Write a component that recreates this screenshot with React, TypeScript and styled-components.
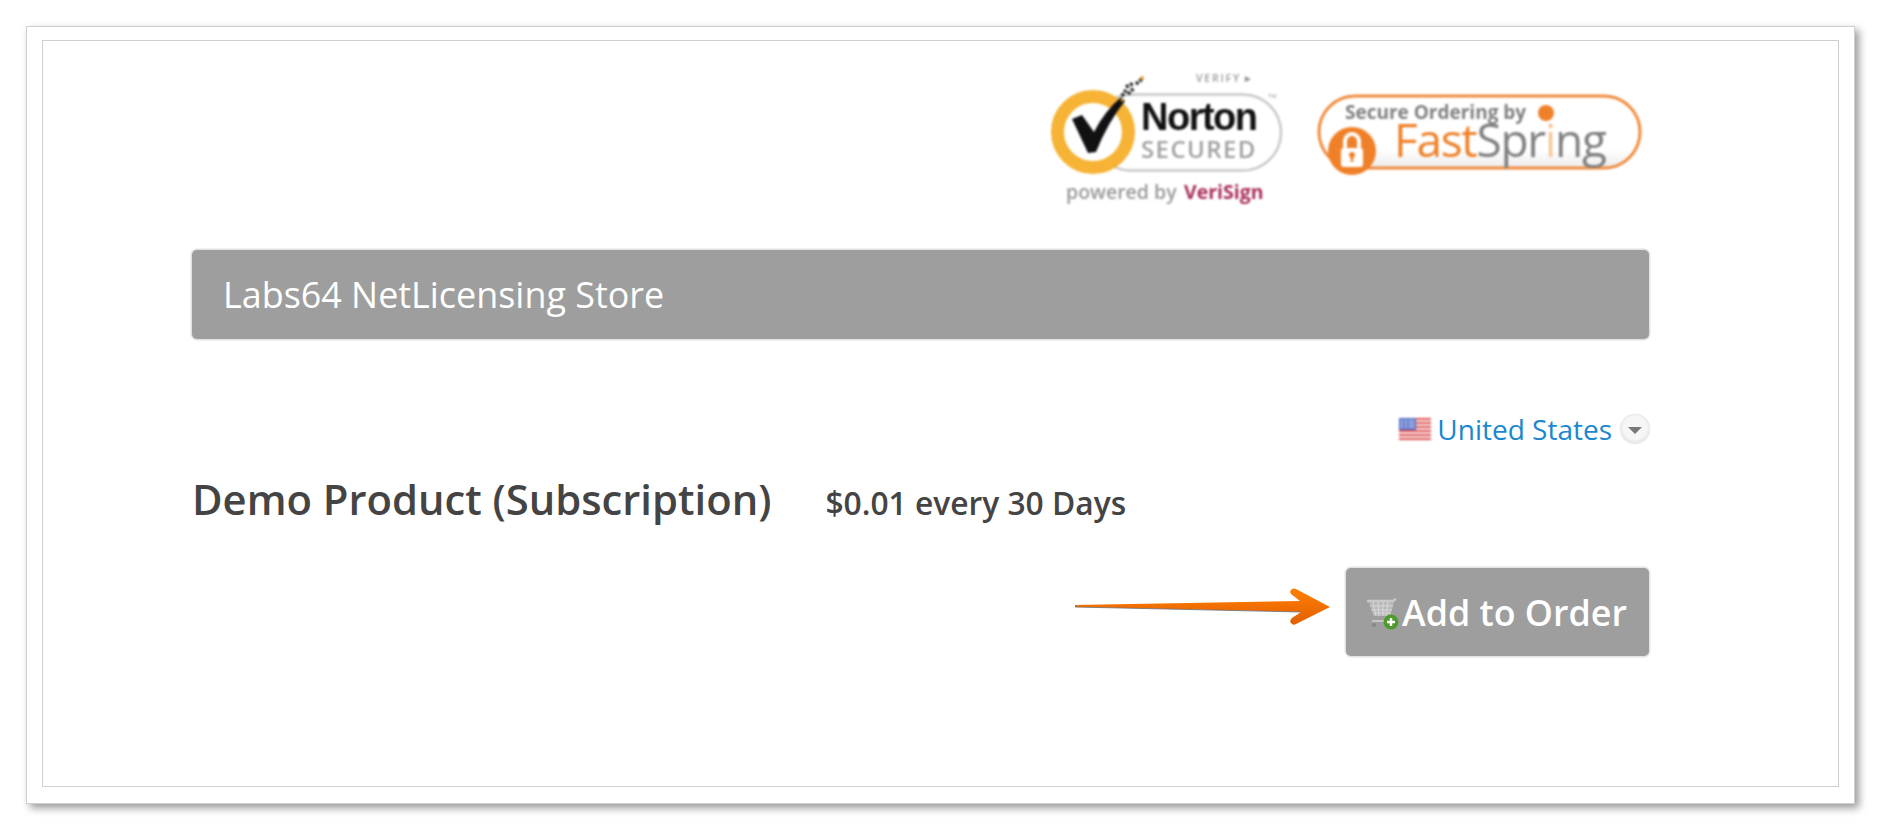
import React from "react";
import styled, { createGlobalStyle } from "styled-components";

const Global = createGlobalStyle`
  html, body { margin: 0; padding: 0; background: #fff; }
  body { font-family: "Open Sans", "Liberation Sans", sans-serif; overflow: hidden; }
`;
const Page = styled.div`
  width: 1881px;
  height: 830px;
  padding: 26px 0 0 26px;
  box-sizing: border-box;
`;
const Frame = styled.div`
  width: 1829px;
  height: 778px;
  box-sizing: border-box;
  padding: 13px 15px 15px 15px;
  background: #fff;
  border: 1px solid #cfcfcf;
  box-shadow: 4px 4px 8px rgba(0, 0, 0, 0.4);
`;
const Inner = styled.div`
  height: 747px;
  box-sizing: border-box;
  border: 1px solid #cfcfcf;
  padding: 29px 189px 0 149px;
  display: flex;
  flex-direction: column;
`;
const Badges = styled.div`
  display: flex;
  justify-content: flex-end;
  align-items: flex-start;
  gap: 33px;
  height: 180px;
  padding-right: 5px;
`;
const Logo = styled.svg`
  display: block;
  filter: blur(0.8px);
  flex: none;
`;
const FsLogo = styled(Logo)`
  margin-top: 22px;
`;
const StoreBar = styled.div`
  height: 89px;
  box-sizing: border-box;
  background: #9e9e9e;
  border-radius: 5px;
  box-shadow: 0 0 0 1.5px #e2e2e2;
  padding-left: 31px;
  display: flex;
  align-items: center;
  color: #fff;
  font-size: 35.9px;
  font-weight: 400;
`;
const CountryRow = styled.div`
  display: flex;
  justify-content: flex-end;
  align-items: center;
  gap: 6px;
  margin-top: 70px;
  height: 40px;
  color: #1a87cf;
  font-size: 28px;
`;
const Flag = styled.svg`
  filter: blur(0.8px);
  flex: none;
`;
const Caret = styled.span`
  width: 28px;
  height: 28px;
  margin-left: 3px;
  border-radius: 50%;
  background: radial-gradient(circle at 50% 45%, #f6f6f6 55%, #cfcfcf 100%);
  box-shadow: 0 0 2px rgba(0, 0, 0, 0.35);
  display: flex;
  align-items: center;
  justify-content: center;
  &::after {
    content: "";
    border-left: 7px solid transparent;
    border-right: 7px solid transparent;
    border-top: 7px solid #777;
    margin-top: 3px;
  }
`;
const ProductRow = styled.div`
  display: flex;
  align-items: baseline;
  gap: 54px;
  margin-top: 21px;
  color: #444;
  font-weight: 600;
`;
const ProductName = styled.span`
  font-size: 41.75px;
`;
const ProductPrice = styled.span`
  font-size: 31.75px;
`;
const ActionRow = styled.div`
  display: flex;
  justify-content: flex-end;
  align-items: center;
  gap: 15px;
  margin-top: 41px;
`;
const ArrowIcon = styled.svg`
  flex: none;
  margin-bottom: 10px;
`;
const AddButton = styled.div`
  width: 303px;
  height: 88px;
  box-sizing: border-box;
  background: #9e9e9e;
  border-radius: 5px;
  box-shadow: 0 0 0 1.5px #e2e2e2;
  display: flex;
  align-items: center;
  gap: 3px;
  padding-left: 20px;
  color: #fff;
  font-size: 35.8px;
  font-weight: 600;
`;
const CartIcon = styled.svg`
  flex: none;
  margin-top: 4px;
  filter: blur(0.5px);
`;

const Norton = () => (
  <Logo width="233" height="136" viewBox="0 0 233 136">
    <rect x="43" y="24.5" width="188" height="76" rx="38" fill="#fff" stroke="#c8c8c8" strokeWidth="2.5" />
    <circle cx="43" cy="62" r="35.5" fill="#fff" stroke="#f6b335" strokeWidth="13" />
    <path d="M22 49 L32 45 L44 62 Q54 42 71 27 L75 31 Q58 52 46 82 L38 83 Z" fill="#111" />
    <path d="M72 26 L76 20 M78 24 L84 18 M76 17 L84 13 M86 14 L92 9" fill="none" stroke="#222" strokeWidth="3.5" strokeDasharray="3 1.5" />
    <circle cx="72" cy="30" r="1.5" fill="#e9a030" />
    <circle cx="92" cy="8" r="2" fill="#e9a030" />
    <text x="146" y="12" fontFamily="Open Sans, sans-serif" fontSize="10.5" fontWeight="600" letterSpacing="1.8" fill="#999">VERIFY ▸</text>
    <text x="218" y="28" fontFamily="Open Sans, sans-serif" fontSize="6" fill="#999">TM</text>
    <text x="91" y="60" fontFamily="Liberation Sans, sans-serif" fontSize="38" fontWeight="700" letterSpacing="-1.5" fill="#111">Norton</text>
    <text x="91" y="88" fontFamily="Open Sans, sans-serif" fontSize="24" fontWeight="600" letterSpacing="1.4" fill="#a0a0a0">SECURED</text>
    <text x="16" y="129" fontFamily="Open Sans, sans-serif" fontSize="19.5" fontWeight="600" fill="#999">powered by</text>
    <text x="134" y="129" fontFamily="Open Sans, sans-serif" fontSize="19.5" fontWeight="700" fill="#a82f5c">VeriSign</text>
  </Logo>
);

const FastSpring = () => (
  <FsLogo width="328" height="88" viewBox="0 0 328 88">
    <defs>
      <linearGradient id="fsBg" x1="0" y1="0" x2="0" y2="1">
        <stop offset="0" stopColor="#fff" />
        <stop offset="0.75" stopColor="#fff" />
        <stop offset="1" stopColor="#ececec" />
      </linearGradient>
    </defs>
    <rect x="3" y="4" width="321" height="72" rx="36" fill="url(#fsBg)" stroke="#f08a3c" strokeWidth="3" />
    <circle cx="36" cy="59" r="24" fill="#f08028" />
    <rect x="25" y="56" width="22" height="19" rx="3" fill="#fff" />
    <path d="M29 56 V49 a7 7 0 0 1 14 0 V56" fill="none" stroke="#fff" strokeWidth="4" />
    <circle cx="36" cy="63" r="3" fill="#f08028" />
    <rect x="34.8" y="63" width="2.4" height="7" fill="#f08028" />
    <text x="29" y="27" fontFamily="Open Sans, sans-serif" fontSize="19" fontWeight="700" fill="#808080">Secure Ordering by</text>
    <text x="78" y="65" fontFamily="Open Sans, sans-serif" fontSize="46" fill="#808080" textLength="213" lengthAdjust="spacing">
      <tspan fill="#f08028">Fast</tspan>Spr<tspan fill="#f7c8a0">i</tspan>ng
    </text>
    <circle cx="230" cy="21" r="8" fill="#f08028" />
  </FsLogo>
);

const Arrow = () => (
  <ArrowIcon width="256" height="38" viewBox="0 0 256 38">
    <defs>
      <linearGradient id="arrowFill" x1="0" y1="0" x2="0" y2="1">
        <stop offset="0" stopColor="#ff7f00" />
        <stop offset="1" stopColor="#e25f00" />
      </linearGradient>
    </defs>
    <path
      d="M0 17 L225 13 L216 6 Q214 3 217 1 Q219 0 221 1 L255 19 L221 36 Q218 38 216 35 Q214 33 217 30 L226 24 L0 19 Z"
      fill="url(#arrowFill)"
    />
    <path d="M0 19 L226 24" stroke="#6b6f78" strokeWidth="0.8" fill="none" />
  </ArrowIcon>
);

const Cart = () => (
  <CartIcon width="33" height="32" viewBox="0 0 33 32">
    <path d="M1 3 H27 L30 1" stroke="#c9c9c9" strokeWidth="2.5" fill="none" />
    <path d="M3 4 L8 18 H24 L28 4 Z" fill="#b9b9b9" />
    <path d="M7 4 L10 18 M12 4 L13 18 M17 4 V18 M22 4 L20 18 M4 8 H27 M5 12 H26 M7 15 H25" stroke="#d8d8d8" strokeWidth="1" />
    <path d="M6 23 H20" stroke="#c4c4c4" strokeWidth="2" />
    <circle cx="8" cy="27" r="2" fill="#888" />
    <circle cx="25" cy="24" r="7.5" fill="#4f9a2e" />
    <path d="M25 20 V28 M21 24 H29" stroke="#fff" strokeWidth="2.4" />
  </CartIcon>
);

const USFlag = () => (
  <Flag width="32" height="22" viewBox="0 0 32 22">
    <rect width="32" height="22" fill="#f7f0f0" />
    {[0, 4, 8, 12, 16, 20].map((y) => (
      <rect key={y} y={y} width="32" height="2" fill="#e0504f" />
    ))}
    <rect width="17" height="12" fill="#5a74c8" />
    {[3, 7, 11, 14].map((x) =>
      [3, 6, 9].map((y) => <circle key={`${x}-${y}`} cx={x} cy={y} r="0.9" fill="#fff" />)
    )}
  </Flag>
);

export default function App() {
  return (
    <Page>
      <Global />
      <Frame>
        <Inner>
          <Badges>
            <Norton />
            <FastSpring />
          </Badges>
          <StoreBar>Labs64 NetLicensing Store</StoreBar>
          <CountryRow>
            <USFlag />
            <span>United States</span>
            <Caret />
          </CountryRow>
          <ProductRow>
            <ProductName>Demo Product (Subscription)</ProductName>
            <ProductPrice>$0.01 every 30 Days</ProductPrice>
          </ProductRow>
          <ActionRow>
            <Arrow />
            <AddButton>
              <Cart />
              <span>Add to Order</span>
            </AddButton>
          </ActionRow>
        </Inner>
      </Frame>
    </Page>
  );
}
